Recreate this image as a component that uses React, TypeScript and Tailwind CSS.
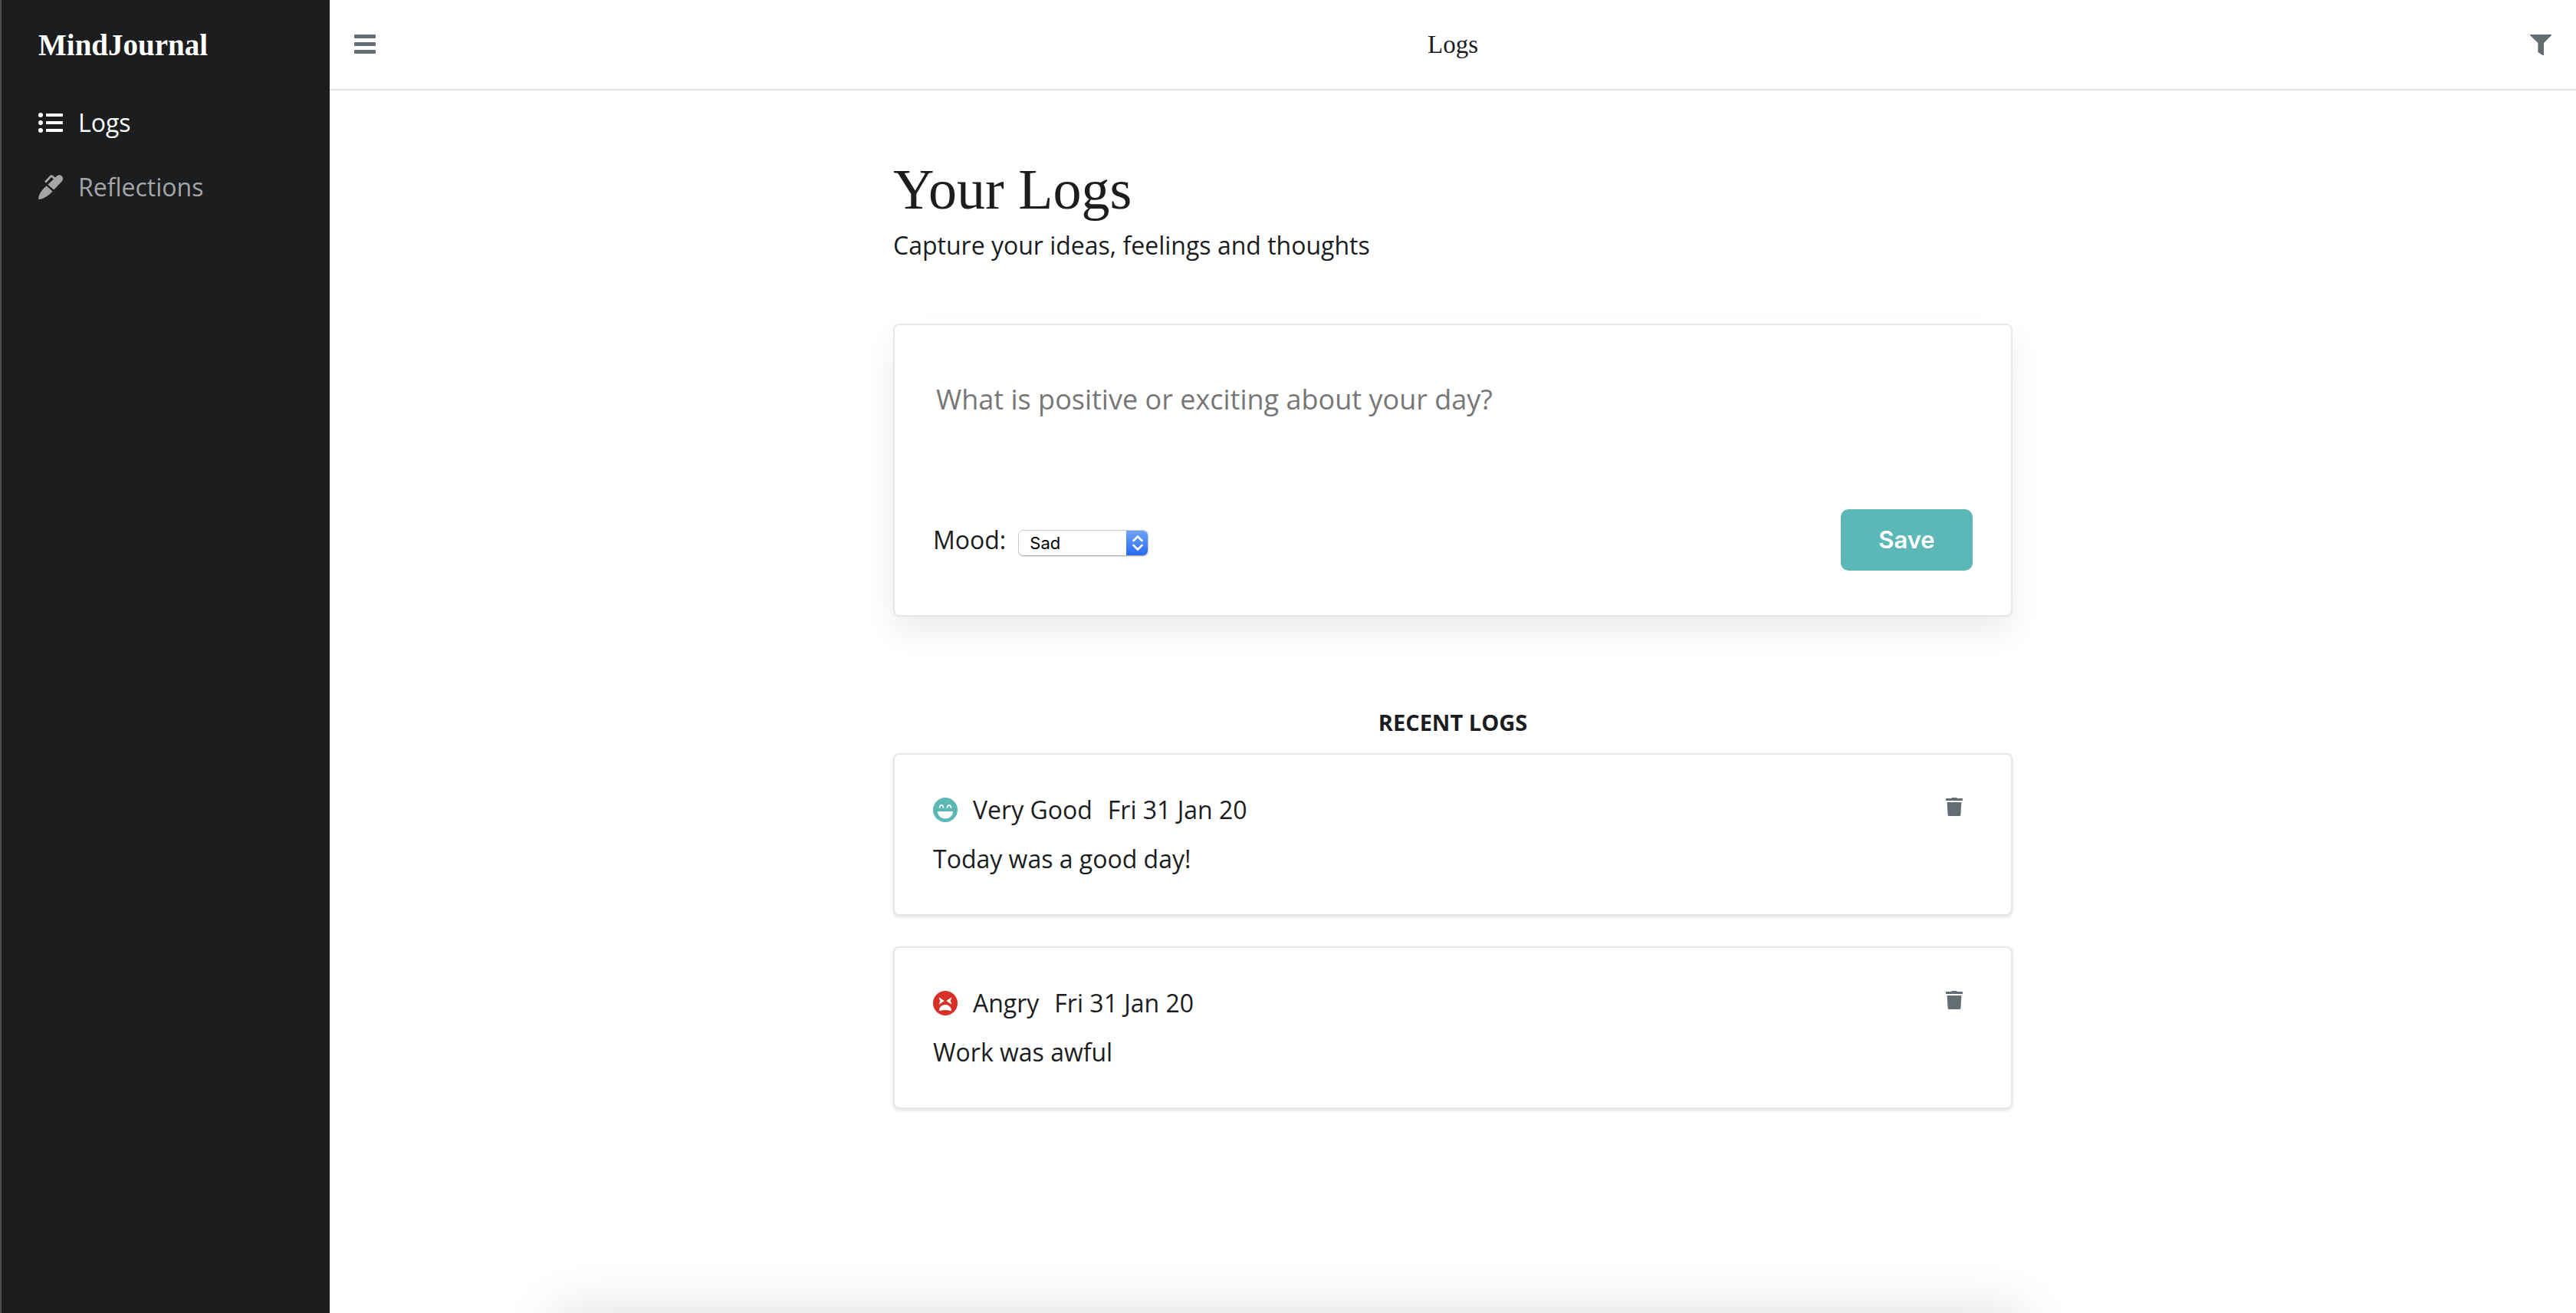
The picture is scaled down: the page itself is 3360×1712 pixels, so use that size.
import React, { useState } from "react";

type IconProps = { className?: string };

const ListIcon = ({ className }: IconProps) => (
  <svg viewBox="0 0 32 32" className={className} fill="currentColor" aria-hidden="true">
    {[6, 16, 26].map((y) => (
      <g key={y}>
        <circle cx="3" cy={y} r="3" />
        <rect x="10" y={y - 2} width="22" height="4" rx="1" />
      </g>
    ))}
  </svg>
);

const PenIcon = ({ className }: IconProps) => (
  <svg viewBox="0 0 32 32" className={className} fill="currentColor" aria-hidden="true">
    <path d="M12.3 12.8 20 5.600 23.600 1.800C25.800-.3 28.900-.4 30.700 1.400c1.800 1.900 1.700 5.100-.1 7.200L20.300 19.400z" />
    <path d="M10.7 14.3 18.500 21.600C13.400 27.400 6.400 31.600.2 32-.4 26.200 4.200 20 10.700 14.300z" />
    <path d="M9.900 8.700 15.800 2.400Q17.100 1.100 18.500 2.300L21 4.600" fill="none" stroke="currentColor" strokeWidth="2.8" strokeLinecap="round" />
  </svg>
);

const MenuIcon = ({ className }: IconProps) => (
  <svg viewBox="0 0 28 28" className={className} fill="currentColor" aria-hidden="true">
    <rect y="1" width="28" height="5" rx="1" />
    <rect y="11" width="28" height="5" rx="1" />
    <rect y="21" width="28" height="5" rx="1" />
  </svg>
);

const FilterIcon = ({ className }: IconProps) => (
  <svg viewBox="0 0 28 28" className={className} fill="currentColor" aria-hidden="true">
    <path d="M0 1h28v1L18 12v16h-1.600l-6-4V12L0 2z" />
  </svg>
);

const TrashIcon = ({ className }: IconProps) => (
  <svg viewBox="0 0 22 24" className={className} fill="currentColor" aria-hidden="true">
    <path d="M7.500 0h7v1H21q1 0 1 1v2H0V2q0-1 1-1h6.500zM1.600 6h18.800l-1 16.400q-.2 1.600-1.700 1.600H4.300q-1.500 0-1.700-1.600z" />
  </svg>
);

const LaughIcon = ({ className }: IconProps) => (
  <svg viewBox="0 0 32 32" className={className} aria-hidden="true">
    <circle cx="16" cy="16" r="16" fill="currentColor" />
    <path d="M8.600 13C9 8.800 13 8.800 13.400 13M18.600 13C19 8.800 23 8.800 23.400 13" fill="none" stroke="#fff" strokeWidth="1.8" strokeLinecap="round" />
    <path d="M6.600 18h18.800q.7 0 .6.900C25 24.500 21 27.200 16 27.200S7 24.500 6 18.900Q5.900 18 6.600 18z" fill="#fff" />
  </svg>
);

const AngryIcon = ({ className }: IconProps) => (
  <svg viewBox="0 0 32 32" className={className} aria-hidden="true">
    <circle cx="16" cy="16" r="16" fill="currentColor" />
    <path d="M8 8.800 14.300 13 8 17.200 9.600 13zM24 8.800 17.700 13 24 17.200 22.400 13z" fill="#fff" stroke="#fff" strokeWidth=".6" strokeLinejoin="round" />
    <path d="M8 25.200C8.300 21 11.800 18 16 18s7.700 3 8 7.200q0 1-1 .7C18.500 24.700 13.500 24.700 9 25.900q-1 .3-1-.7z" fill="#fff" />
  </svg>
);

const logs = [
  { mood: "Very Good", date: "Fri 31 Jan 20", text: "Today was a good day!", Icon: LaughIcon, color: "text-[#5cb7b7]" },
  { mood: "Angry", date: "Fri 31 Jan 20", text: "Work was awful", Icon: AngryIcon, color: "text-[#d63027]" },
];

function Sidebar() {
  return (
    <aside className="w-[430px] shrink-0 border-l-2 border-[#4b4c4e] bg-[#1c1d1f] text-white">
      <div className="flex h-[118px] items-center px-12 font-['Liberation_Serif',serif] text-[39px] font-bold">MindJournal</div>
      <nav>
        <a href="#logs" className="flex h-[84px] items-center gap-5 px-12 text-[32px] leading-[48px]">
          <ListIcon className="size-8" />
          Logs
        </a>
        <a href="#reflections" className="flex h-[84px] items-center gap-5 px-12 text-[32px] leading-[48px] text-[#a4a5a6]">
          <PenIcon className="size-8" />
          Reflections
        </a>
      </nav>
    </aside>
  );
}

function TopBar() {
  return (
    <header className="flex h-[118px] items-center justify-between border-b-2 border-[#e2e7e9] px-8 text-[#636e72]">
      <button type="button" aria-label="Toggle menu">
        <MenuIcon className="size-7" />
      </button>
      <div className="font-['Liberation_Serif',serif] text-[33px] leading-[48px] text-[#1c1d1f]">Logs</div>
      <button type="button" aria-label="Filter logs">
        <FilterIcon className="size-7" />
      </button>
    </header>
  );
}

function LogForm() {
  const [mood, setMood] = useState("Sad");
  return (
    <form
      onSubmit={(e) => e.preventDefault()}
      className="mt-[78px] rounded-lg border-2 border-[#e2e8eb] bg-white px-[50px] pt-[50px] pb-[58px] shadow-[0_20px_40px_rgba(0,0,0,0.08)]"
    >
      <textarea
        aria-label="Log entry"
        placeholder="What is positive or exciting about your day?"
        className="block h-[190px] w-full resize-none px-1 pt-5 text-[36px] leading-[54px] outline-none placeholder:text-[#777777]"
      />
      <div className="flex items-center justify-between">
        <div className="flex items-center gap-4">
          <label htmlFor="mood" className="text-[32px] leading-[48px]">Mood:</label>
          <div className="relative mt-2 flex h-[34px] w-[170px] overflow-hidden rounded-[7px] border border-[#c8c8c8] border-b-[#b0b0b0] shadow-[0_1px_1px_rgba(0,0,0,0.12)]">
            <select
              id="mood"
              value={mood}
              onChange={(e) => setMood(e.target.value)}
              className="w-full appearance-none bg-white pl-[14px] font-['Inter',sans-serif] text-[22px] leading-8 text-black outline-none"
            >
              <option>Very Good</option>
              <option>Good</option>
              <option>Sad</option>
              <option>Angry</option>
            </select>
            <span className="pointer-events-none absolute -inset-y-px -right-px flex w-[29px] items-center justify-center bg-linear-to-b from-[#6fa3f5] to-[#2468f6]">
              <svg viewBox="0 0 14 20" className="h-5 w-[14px]" fill="none" stroke="#fff" strokeWidth="2.6" strokeLinecap="round" strokeLinejoin="round" aria-hidden="true">
                <path d="M1.500 7 7 1.500 12.500 7M1.500 13 7 18.500 12.500 13" />
              </svg>
            </span>
          </div>
        </div>
        <button type="submit" className="h-20 w-[172px] rounded-[10px] bg-[#5cb7b7] font-['Inter',sans-serif] text-[31px] font-semibold text-white">
          Save
        </button>
      </div>
    </form>
  );
}

export default function App() {
  return (
    <div className="flex min-h-screen overflow-x-hidden bg-white font-['Open_Sans',sans-serif] text-[#1c1d1f]">
      <Sidebar />
      <div className="min-w-0 flex-1">
        <TopBar />
        <main className="mx-auto max-w-[1460px] pt-[84px] pb-22">
          <h1 className="mb-1 font-['Liberation_Serif',serif] text-[74px] leading-[90px]">Your Logs</h1>
          <p className="text-[32px] leading-[48px]">Capture your ideas, feelings and thoughts</p>
          <LogForm />
          <h2 className="mt-[118px] mb-5 text-center text-[29px] leading-10 font-bold">RECENT LOGS</h2>
          <ul className="flex flex-col gap-10">
            {logs.map(({ mood, date, text, Icon, color }) => (
              <li key={mood} className="flex items-start justify-between rounded-lg border-2 border-[#e2e8eb] bg-white px-[50px] py-12 shadow-[0_2px_4px_rgba(0,0,0,0.12)]">
                <div className="flex flex-col gap-4 text-[32px] leading-[48px]">
                  <div className="flex items-center gap-5">
                    <Icon className={`size-8 ${color}`} />
                    <span>{mood}</span>
                    <span>{date}</span>
                  </div>
                  <p>{text}</p>
                </div>
                <button type="button" aria-label={`Delete ${mood} log`} className="flex h-10 w-12 items-center justify-center text-[#636e72]">
                  <TrashIcon className="h-6 w-[22px]" />
                </button>
              </li>
            ))}
          </ul>
        </main>
      </div>
      <div className="pointer-events-none fixed inset-x-0 top-full mx-auto h-40 w-[57%] shadow-[0_0_72px_rgba(0,0,0,0.14)]" />
    </div>
  );
}
